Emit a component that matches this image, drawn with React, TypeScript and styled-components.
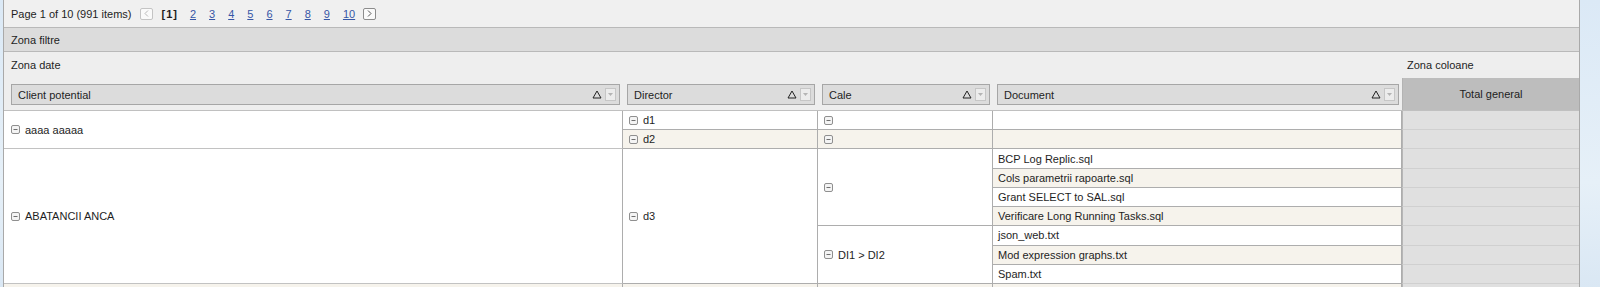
import React from "react";
import styled, { createGlobalStyle } from "styled-components";

const Global = createGlobalStyle`
  html, body { margin: 0; padding: 0; }
  body {
    background: linear-gradient(180deg, #dbe9f6 0%, #e6f0f8 60%, #d8e6f3 100%);
    font-family: "Liberation Sans", Arial, sans-serif;
    font-size: 11px;
    color: #1e1e1e;
    overflow: hidden;
  }
`;

const COLS = "619px 195px 175px 409px 177px";

const Frame = styled.div`
  margin-left: 3px;
  width: 1577px;
  box-sizing: border-box;
  border-left: 1px solid #a9a9a9;
  border-right: 1px solid #a9a9a9;
  background: #efefef;
`;

const Pager = styled.div`
  height: 27px;
  display: flex;
  align-items: center;
  padding-left: 7px;
  background: #f0f0f0;
  border-bottom: 1px solid #b9b9b9;
`;

const PagerInfo = styled.span`
  margin-right: 9px;
`;

const NavButton = styled.span<{ $disabled?: boolean }>`
  width: 13px;
  height: 12px;
  box-sizing: border-box;
  border: 1px solid ${(p) => (p.$disabled ? "#c4c4c4" : "#8c8c8c")};
  border-radius: 2px;
  background: #fafafa;
  display: inline-flex;
  align-items: center;
  justify-content: center;
  margin-left: ${(p) => (p.$disabled ? "0" : "8px")};
`;

const Current = styled.span`
  font-weight: bold;
  letter-spacing: 1px;
  margin: 0 12px 0 8px;
`;

const PageLink = styled.a`
  color: #3656a6;
  text-decoration: underline;
  margin-right: 13px;
  &:last-of-type { margin-right: 0; }
`;

const FilterZone = styled.div`
  height: 23px;
  display: flex;
  align-items: center;
  padding-left: 7px;
  background: #dcdcdc;
  border-bottom: 1px solid #b9b9b9;
`;

const HeadGrid = styled.div`
  display: grid;
  grid-template-columns: ${COLS};
  grid-template-rows: 26px 32px;
  background: #eeeeee;
  border-bottom: 1px solid #c0c0c0;
`;

const ZoneLabel = styled.div<{ $span?: number; $pad?: number }>`
  grid-column: span ${(p) => p.$span ?? 1};
  display: flex;
  align-items: center;
  padding-left: ${(p) => p.$pad ?? 7}px;
`;

const HeadCell = styled.div<{ $first?: boolean }>`
  display: flex;
  align-items: flex-start;
  padding: 6px 3px 0 ${(p) => (p.$first ? 7 : 4)}px;
`;

const FieldButton = styled.div`
  flex: 1;
  height: 21px;
  box-sizing: border-box;
  border: 1px solid #a6a6a6;
  background: #dcdcdc;
  display: flex;
  align-items: center;
  padding: 0 3px 0 6px;
`;

const FieldName = styled.span`
  flex: 1;
`;

const SortMark = styled.svg`
  width: 10px;
  height: 9px;
  margin-right: 3px;
`;

const DropBox = styled.span`
  width: 11px;
  height: 13px;
  box-sizing: border-box;
  border: 1px solid #c6c6c6;
  background: #ececec;
  display: inline-flex;
  align-items: center;
  justify-content: center;
`;

const TotalHead = styled.div`
  background: #bdbdbd;
  border-left: 1px solid #b3b3b3;
  display: flex;
  align-items: center;
  justify-content: center;
`;

const BodyGrid = styled.div`
  display: grid;
  grid-template-columns: ${COLS};
  grid-template-rows: repeat(10, 19.22px);
  background: #ffffff;
`;

const Cell = styled.div<{ $rows?: number; $alt?: boolean; $strong?: boolean }>`
  grid-row: span ${(p) => p.$rows ?? 1};
  box-sizing: border-box;
  display: flex;
  align-items: center;
  gap: 5px;
  padding-left: ${(p) => (p.$strong ? 7 : 6)}px;
  background: ${(p) => (p.$alt ? "#f6f3ec" : "#ffffff")};
  border-right: 1px solid #adadad;
  border-bottom: 1px solid ${(p) => (p.$strong ? "#c2c2c2" : "#adadad")};
  white-space: nowrap;
  overflow: hidden;
`;

const DocCell = styled(Cell)`
  padding-left: 5px;
`;

const TotalCell = styled.div`
  box-sizing: border-box;
  background: #e0e0e0;
  border-left: 1px solid #b6b6b6;
  border-bottom: 1px solid #d0d0d0;
`;

const Toggle = () => (
  <svg width="9" height="9" viewBox="0 0 9 9">
    <rect x="0.5" y="0.5" width="8" height="8" rx="1.5" fill="#f4f4f4" stroke="#8f8f8f" />
    <line x1="2.5" y1="4.5" x2="6.5" y2="4.5" stroke="#6f6f6f" />
  </svg>
);

const Field = ({ name }: { name: string }) => (
  <FieldButton>
    <FieldName>{name}</FieldName>
    <SortMark viewBox="0 0 10 9">
      <path d="M5 1 L9 8 L1 8 Z" fill="none" stroke="#222" strokeWidth="1" />
    </SortMark>
    <DropBox>
      <svg width="5" height="3" viewBox="0 0 5 3">
        <path d="M0 0 L5 0 L2.5 3 Z" fill="#b4b4b4" />
      </svg>
    </DropBox>
  </FieldButton>
);

const Chevron = ({ dir, color }: { dir: "l" | "r"; color: string }) => (
  <svg width="5" height="7" viewBox="0 0 5 7">
    <path
      d={dir === "l" ? "M4 0.5 L1 3.5 L4 6.5" : "M1 0.5 L4 3.5 L1 6.5"}
      fill="none"
      stroke={color}
      strokeWidth="1"
    />
  </svg>
);

const docs = [
  "BCP Log Replic.sql",
  "Cols parametrii rapoarte.sql",
  "Grant SELECT to SAL.sql",
  "Verificare Long Running Tasks.sql",
  "json_web.txt",
  "Mod expression graphs.txt",
  "Spam.txt",
];

export default function App() {
  return (
    <>
      <Global />
      <Frame>
        <Pager>
          <PagerInfo>Page 1 of 10 (991 items)</PagerInfo>
          <NavButton $disabled>
            <Chevron dir="l" color="#b8b8b8" />
          </NavButton>
          <Current>[1]</Current>
          {["2", "3", "4", "5", "6", "7", "8", "9", "10"].map((n) => (
            <PageLink key={n}>{n}</PageLink>
          ))}
          <NavButton>
            <Chevron dir="r" color="#555" />
          </NavButton>
        </Pager>
        <FilterZone>Zona filtre</FilterZone>
        <HeadGrid>
          <ZoneLabel $span={4}>Zona date</ZoneLabel>
          <ZoneLabel $pad={5}>Zona coloane</ZoneLabel>
          <HeadCell $first>
            <Field name="Client potential" />
          </HeadCell>
          <HeadCell>
            <Field name="Director" />
          </HeadCell>
          <HeadCell>
            <Field name="Cale" />
          </HeadCell>
          <HeadCell>
            <Field name="Document" />
          </HeadCell>
          <TotalHead>Total general</TotalHead>
        </HeadGrid>
        <BodyGrid>
          {/* row 1 */}
          <Cell $rows={2} $strong>
            <Toggle />
            aaaa aaaaa
          </Cell>
          <Cell>
            <Toggle />
            d1
          </Cell>
          <Cell>
            <Toggle />
          </Cell>
          <DocCell />
          <TotalCell />
          {/* row 2 */}
          <Cell $alt>
            <Toggle />
            d2
          </Cell>
          <Cell $alt>
            <Toggle />
          </Cell>
          <DocCell $alt />
          <TotalCell />
          {/* rows 3-9 */}
          <Cell $rows={7} $strong>
            <Toggle />
            ABATANCII ANCA
          </Cell>
          <Cell $rows={7}>
            <Toggle />
            d3
          </Cell>
          <Cell $rows={4}>
            <Toggle />
          </Cell>
          <DocCell>{docs[0]}</DocCell>
          <TotalCell />
          <DocCell $alt>{docs[1]}</DocCell>
          <TotalCell />
          <DocCell>{docs[2]}</DocCell>
          <TotalCell />
          <DocCell $alt>{docs[3]}</DocCell>
          <TotalCell />
          <Cell $rows={3}>
            <Toggle />
            DI1 &gt; DI2
          </Cell>
          <DocCell>{docs[4]}</DocCell>
          <TotalCell />
          <DocCell $alt>{docs[5]}</DocCell>
          <TotalCell />
          <DocCell>{docs[6]}</DocCell>
          <TotalCell />
          {/* row 10 (cut off) */}
          <Cell $alt $strong />
          <Cell $alt />
          <Cell $alt />
          <DocCell $alt />
          <TotalCell />
        </BodyGrid>
      </Frame>
    </>
  );
}
